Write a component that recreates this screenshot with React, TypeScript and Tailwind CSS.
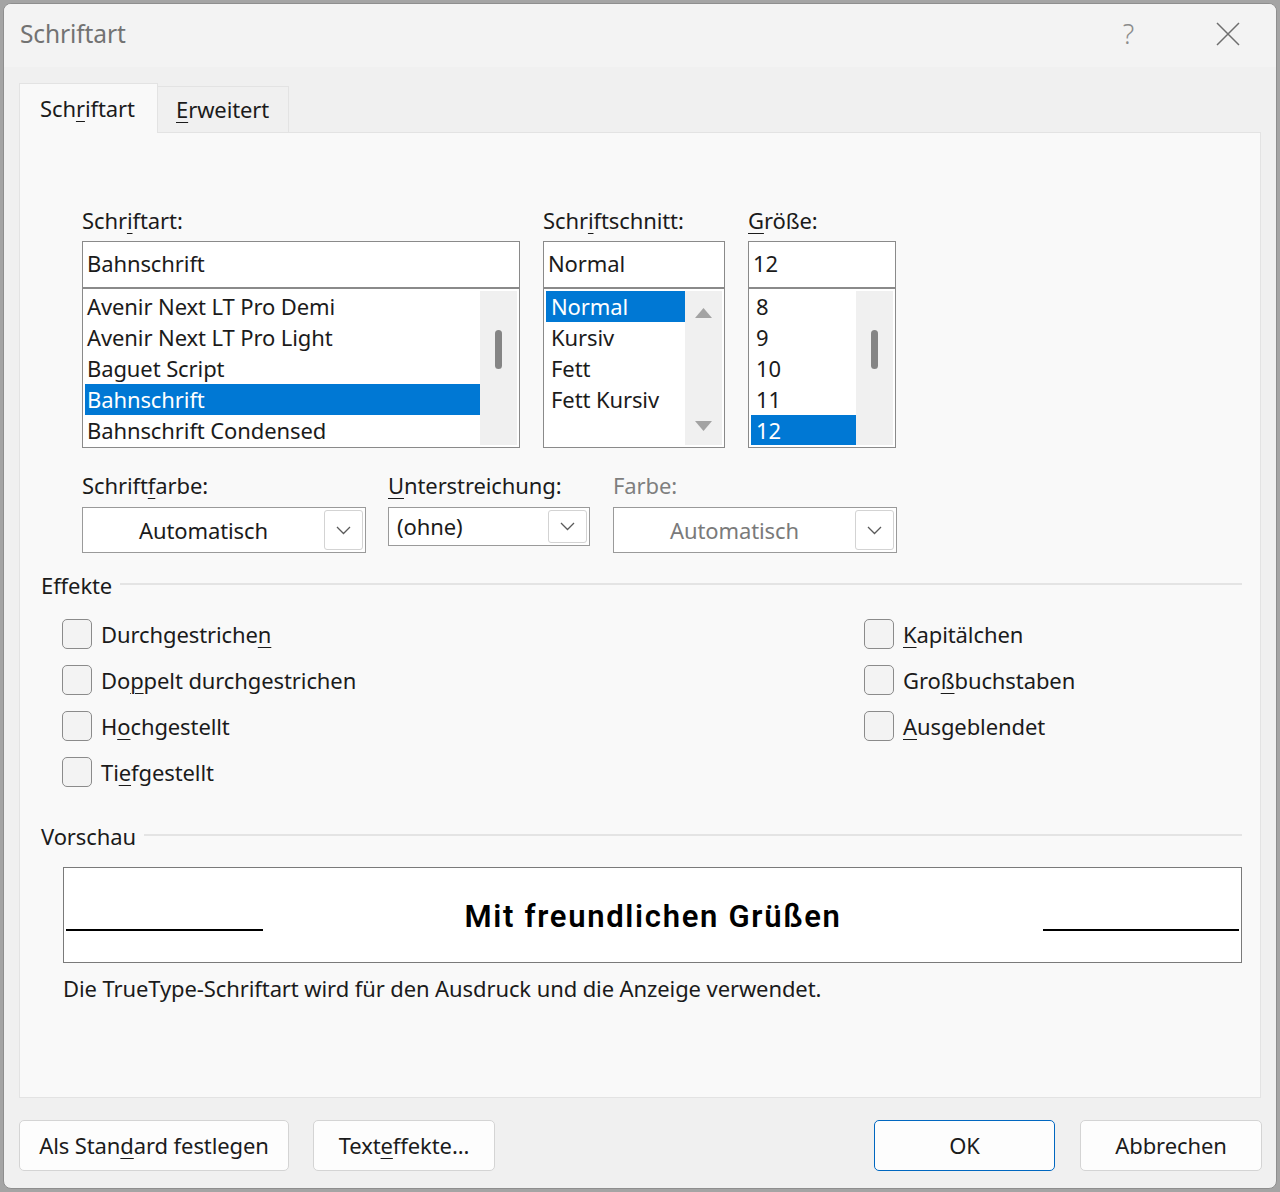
import React from "react";

const Acc = ({ pre, k, post }: { pre: string; k: string; post: string }) => (
  <span>
    {pre}
    <span className="underline decoration-1 underline-offset-[4px]">{k}</span>
    {post}
  </span>
);

const Chevron = ({ color = "#5a5a5a" }: { color?: string }) => (
  <svg width="15" height="9" viewBox="0 0 15 9">
    <path d="M1 1 L7.5 7.5 L14 1" fill="none" stroke={color} strokeWidth="1.3" />
  </svg>
);

const Checkbox = ({ label }: { label: React.ReactNode }) => (
  <div className="flex items-center h-[30px] gap-[9px]">
    <div className="w-[30px] h-[30px] rounded-[5px] border-[1.5px] border-[#8b8b8b] bg-[#f3f3f3]" />
    <span className="leading-[30px]">{label}</span>
  </div>
);

const ListBox = ({
  items,
  selected,
  itemPad,
  scroll,
}: {
  items: string[];
  selected: number;
  itemPad: string;
  scroll: "thumb" | "arrows";
}) => (
  <div className="h-[160px] border border-[#8a8a8a] bg-white p-[2px] flex overflow-hidden">
    <div className="flex-1 flex flex-col overflow-hidden">
      {items.map((it, i) => (
        <div
          key={it}
          className={
            "h-[31px] shrink-0 leading-[31px] " + itemPad + " " + (i === selected ? "bg-[#0078d4] text-white" : "")
          }
        >
          {it}
        </div>
      ))}
    </div>
    <div className="w-[37px] bg-[#f0f0f0] flex flex-col items-center">
      {scroll === "thumb" ? (
        <div className="mt-[39px] w-[7px] h-[39px] rounded-full bg-[#858585]" />
      ) : (
        <>
          <svg className="mt-[17px]" width="17" height="10" viewBox="0 0 17 10">
            <polygon points="8.5,0 17,10 0,10" fill="#a3a3a3" />
          </svg>
          <svg className="mt-auto mb-[14px]" width="17" height="10" viewBox="0 0 17 10">
            <polygon points="0,0 17,0 8.5,10" fill="#a3a3a3" />
          </svg>
        </>
      )}
    </div>
  </div>
);

const Combo = ({
  text,
  w,
  h,
  center,
  disabled,
}: {
  text: string;
  w: string;
  h: string;
  center?: boolean;
  disabled?: boolean;
}) => (
  <div className={"border border-[#9a9a9a] bg-white flex items-stretch py-[2px] pr-[2px] " + w + " " + h}>
    <div
      className={
        "flex-1 flex items-center " + (center ? "justify-center " : "pl-[8px] ") + (disabled ? "text-[#7a7a7a] " : "")
      }
    >
      {text}
    </div>
    <div className="w-[39px] rounded-[3px] border border-[#d3d3d3] bg-white flex items-center justify-center">
      <Chevron />
    </div>
  </div>
);

const Btn = ({ children, w, primary }: { children: React.ReactNode; w: string; primary?: boolean }) => (
  <div
    className={
      "h-[51px] rounded-[5px] flex items-center justify-center bg-[#fdfdfd] " +
      w +
      " " +
      (primary ? "border-[1.5px] border-[#0067c0]" : "border border-[#d4d4d4]")
    }
  >
    {children}
  </div>
);

export default function App() {
  return (
    <div className="w-[1280px] h-[1192px] bg-[#a4a4a4] p-[3px] font-['Noto_Sans',sans-serif] text-[22px] tracking-[-0.1px] text-[#1b1b1b]">
      <div className="h-full flex flex-col rounded-[8px] border border-[#8e8e8e] bg-[#f0f0f0] overflow-hidden">
        {/* Title bar */}
        <div className="h-[63px] shrink-0 bg-[#f3f3f3] flex items-center pl-[16px] pr-[36px] pb-[3px]">
          <span className="text-[24.5px] text-[#727272]">Schriftart</span>
          <div className="ml-auto flex items-center">
            <span className="text-[27px] text-[#8c8c8c] font-light mr-[82px]">?</span>
            <svg width="24" height="24" viewBox="0 0 24 24">
              <path d="M1 1 L23 23 M23 1 L1 23" stroke="#6e6e6e" strokeWidth="1.5" />
            </svg>
          </div>
        </div>

        {/* Tabs */}
        <div className="h-[65px] shrink-0 flex items-end pl-[15px]">
          <div className="relative z-10 -mb-px h-[50px] w-[139px] border border-b-0 border-[#e3e3e3] bg-[#f9f9f9] pl-[20px] flex items-center">
            <Acc pre="Sch" k="r" post="iftart" />
          </div>
          <div className="h-[46px] w-[131px] border border-l-0 border-b-0 border-[#e3e3e3] bg-[#f0f0f0] pl-[18px] flex items-center">
            <Acc pre="" k="E" post="rweitert" />
          </div>
        </div>

        {/* Panel */}
        <div className="mx-[15px] h-[966px] shrink-0 border border-[#e3e3e3] bg-[#f9f9f9] flex flex-col">
          {/* Font / style / size */}
          <div className="mt-[72px] pl-[62px] flex gap-[23px]">
            <div className="w-[438px] flex flex-col">
              <div className="h-[30px] leading-[30px] mb-[6px]">
                <Acc pre="Schr" k="i" post="ftart:" />
              </div>
              <div className="h-[47px] border border-[#8a8a8a] bg-white pl-[4px] pb-[3px] flex items-center">Bahnschrift</div>
              <ListBox
                items={["Avenir Next LT Pro Demi", "Avenir Next LT Pro Light", "Baguet Script", "Bahnschrift", "Bahnschrift Condensed"]}
                selected={3}
                itemPad="pl-[2px]"
                scroll="thumb"
              />
            </div>
            <div className="w-[182px] flex flex-col">
              <div className="h-[30px] leading-[30px] mb-[6px]">
                <Acc pre="Schr" k="i" post="ftschnitt:" />
              </div>
              <div className="h-[47px] border border-[#8a8a8a] bg-white pl-[4px] pb-[3px] flex items-center">Normal</div>
              <ListBox items={["Normal", "Kursiv", "Fett", "Fett Kursiv"]} selected={0} itemPad="pl-[5px]" scroll="arrows" />
            </div>
            <div className="w-[148px] flex flex-col">
              <div className="h-[30px] leading-[30px] mb-[6px]">
                <Acc pre="" k="G" post="röße:" />
              </div>
              <div className="h-[47px] border border-[#8a8a8a] bg-white pl-[4px] pb-[3px] flex items-center">12</div>
              <ListBox items={["8", "9", "10", "11", "12"]} selected={4} itemPad="pl-[5px]" scroll="thumb" />
            </div>
          </div>

          {/* Color row */}
          <div className="mt-[22px] pl-[62px] flex items-start">
            <div className="w-[306px] flex flex-col">
              <div className="h-[30px] leading-[30px] mb-[7px]">
                <Acc pre="Schrift" k="f" post="arbe:" />
              </div>
              <Combo text="Automatisch" w="w-[284px]" h="h-[46px]" center />
            </div>
            <div className="w-[225px] flex flex-col">
              <div className="h-[30px] leading-[30px] mb-[7px]">
                <Acc pre="" k="U" post="nterstreichung:" />
              </div>
              <Combo text="(ohne)" w="w-[202px]" h="h-[39px]" />
            </div>
            <div className="w-[284px] flex flex-col">
              <div className="h-[30px] leading-[30px] mb-[7px] text-[#7f7f7f]">Farbe:</div>
              <Combo text="Automatisch" w="w-[284px]" h="h-[46px]" center disabled />
            </div>
          </div>

          {/* Effekte */}
          <div className="mt-[17px] pl-[21px] pr-[18px] flex flex-col">
            <div className="h-[30px] flex items-center">
              <span>Effekte</span>
              <div className="flex-1 h-[2px] bg-[#e4e4e4] ml-[8px] mt-[-2px]" />
            </div>
            <div className="mt-[19px] pl-[21px] flex">
              <div className="w-[802px] flex flex-col gap-[16px]">
                <Checkbox label={<Acc pre="Durchgestriche" k="n" post="" />} />
                <Checkbox label={<Acc pre="Do" k="p" post="pelt durchgestrichen" />} />
                <Checkbox label={<Acc pre="H" k="o" post="chgestellt" />} />
                <Checkbox label={<Acc pre="Ti" k="e" post="fgestellt" />} />
              </div>
              <div className="flex flex-col gap-[16px]">
                <Checkbox label={<Acc pre="" k="K" post="apitälchen" />} />
                <Checkbox label={<Acc pre="Gro" k="ß" post="buchstaben" />} />
                <Checkbox label={<Acc pre="" k="A" post="usgeblendet" />} />
              </div>
            </div>

            {/* Vorschau */}
            <div className="mt-[34px] h-[30px] flex items-center">
              <span>Vorschau</span>
              <div className="flex-1 h-[2px] bg-[#e4e4e4] ml-[8px] mt-[-2px]" />
            </div>
            <div className="mt-[16px] ml-[22px] h-[96px] border-[1.5px] border-[#7a7a7a] bg-white flex px-[2px]">
              <div className="w-[197px] h-[1.5px] bg-black mt-[61px]" />
              <div className="flex-1 flex items-center justify-center pt-[4px] font-['Roboto',sans-serif] font-semibold text-[31px] tracking-[1.7px] text-black">
                Mit freundlichen Grüßen
              </div>
              <div className="w-[196px] h-[1.5px] bg-black mt-[61px]" />
            </div>
            <div className="mt-[10px] ml-[22px] h-[30px] leading-[30px]">
              Die TrueType-Schriftart wird für den Ausdruck und die Anzeige verwendet.
            </div>
          </div>
        </div>

        {/* Buttons */}
        <div className="mt-[22px] pl-[15px] pr-[14px] flex">
          <Btn w="w-[270px]">
            <Acc pre="Als Stan" k="d" post="ard festlegen" />
          </Btn>
          <div className="ml-[24px]">
            <Btn w="w-[182px]">
              <Acc pre="Text" k="e" post="ffekte..." />
            </Btn>
          </div>
          <div className="ml-auto">
            <Btn w="w-[181px]" primary>
              OK
            </Btn>
          </div>
          <div className="ml-[25px]">
            <Btn w="w-[182px]">Abbrechen</Btn>
          </div>
        </div>
      </div>
    </div>
  );
}
